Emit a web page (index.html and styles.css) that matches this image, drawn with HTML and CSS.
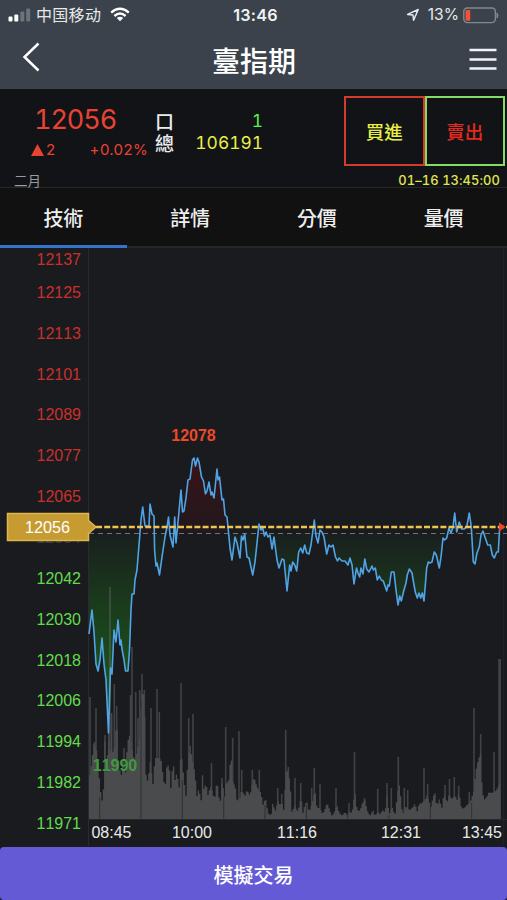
FILE: index.html
```html
<!DOCTYPE html>
<html lang="zh-Hant">
<head>
<meta charset="utf-8">
<title>臺指期</title>
<link rel="stylesheet" href="styles.css">
</head>
<body>
<header class="top">
  <div class="status">
    <div class="status-left">
      <svg width="24" height="14" viewBox="0 0 24 14"><g fill="#fff"><rect x="0.5" y="8.5" width="4" height="5" rx="1"/><rect x="6.3" y="6.5" width="4" height="7" rx="1"/></g><g fill="#6d737b"><rect x="12.3" y="3.5" width="4" height="10" rx="1"/><rect x="18.2" y="0.5" width="4" height="13" rx="1"/></g></svg>
      <span class="carrier">中国移动</span>
      <svg class="wifi" width="20" height="15" viewBox="0 0 20 15"><g fill="none" stroke="#fff" stroke-width="2.4"><path d="M1.2 5.6Q10-2 18.8 5.6"/><path d="M4.4 9Q10 4 15.6 9"/></g><path d="M6.8 11Q10 8.6 13.2 11L10 14.3Z" fill="#fff"/></svg>
    </div>
    <div class="clock">13:46</div>
    <div class="status-right">
      <svg width="14" height="14" viewBox="0 0 14 14"><path d="M1.6 6.4L12.2 1.5L7.6 12.2L7 7Z" fill="none" stroke="#e6e8ea" stroke-width="1.5" stroke-linejoin="round"/></svg>
      <span class="percent">13%</span>
      <svg width="37" height="17" viewBox="0 0 37 17"><rect x="0.8" y="1" width="31.6" height="14.6" rx="3.5" fill="none" stroke="#82888f" stroke-width="1.4"/><rect x="2.6" y="3" width="4.6" height="10.8" rx="1" fill="#f4503c"/><path d="M34 6Q36 8.2 34 11Z" fill="#82888f" stroke="#82888f"/></svg>
    </div>
  </div>
  <div class="titlebar">
    <svg width="20" height="32" viewBox="0 0 20 32"><path d="M16.5 3.5L2.5 17L16.5 30.5" fill="none" stroke="#fff" stroke-width="2.5"/></svg>
    <h1>臺指期</h1>
    <svg width="28" height="24" viewBox="0 0 28 24"><path d="M.5 2H27.5M.5 11.4H27.5M.5 20.6H27.5" stroke="#f2f3fa" stroke-width="2.5"/></svg>
  </div>
</header>
<section class="quote">
  <div class="quote-main">
    <div class="price">
      <div class="last">12056</div>
      <div class="change"><span class="delta"><svg width="13" height="12" viewBox="0 0 13 12"><path d="M6.5 0L13 12H0Z" fill="#e84232"/></svg>2</span><span>+0.02%</span></div>
    </div>
    <div class="volume">
      <div><b>口</b><span class="one">1</span></div>
      <div><b>總</b><span>106191</span></div>
    </div>
    <div class="actions"><div class="buy">買進</div><div class="sell">賣出</div></div>
  </div>
  <div class="quote-foot"><span>二月</span><time>01–16 13:45:00</time></div>
</section>
<nav class="tabs"><div class="active">技術</div><div>詳情</div><div>分價</div><div>量價</div></nav>
<svg class="chart" width="507" height="599" viewBox="0 248 507 599">
  <defs>
    <linearGradient id="down" gradientUnits="userSpaceOnUse" x1="0" y1="534" x2="0" y2="734"><stop offset="0" stop-color="#1b451b" stop-opacity=".12"/><stop offset=".35" stop-color="#1b481b" stop-opacity=".72"/><stop offset="1" stop-color="#1d651d"/></linearGradient>
    <linearGradient id="up" gradientUnits="userSpaceOnUse" x1="0" y1="458" x2="0" y2="534"><stop offset="0" stop-color="#431014" stop-opacity=".8"/><stop offset="1" stop-color="#431014" stop-opacity=".15"/></linearGradient>
    <clipPath id="above"><rect x="89" y="440" width="418" height="94"/></clipPath>
    <clipPath id="below"><rect x="89" y="534" width="418" height="220"/></clipPath>
  </defs>
  <path d="M88.5 248V846" stroke="#292b30"/>
  <path d="M503.5 248V846" stroke="#202227"/>
  <path d="M89 819.5H507" stroke="#26282b"/>
  <g clip-path="url(#above)"><path id="area-up" fill="url(#up)"/></g>
  <g clip-path="url(#below)"><path id="area-down" fill="url(#down)"/></g>
  <path id="spikes" stroke="#77797b" stroke-opacity=".42" stroke-width="1.6"/>
  <path id="bars" fill="#4a4b4d"/>
  <path id="gaps" stroke="#303134" stroke-width="1"/>
  <path d="M89 533.5H507" stroke="#72747c" stroke-dasharray="5 4"/>
  <path id="line" fill="none" stroke="#50a4e6" stroke-width="1.6" stroke-linejoin="round"/>
  <path d="M96 527H507" stroke="#efc550" stroke-width="2.4" stroke-dasharray="6 2.2"/>
  <path d="M499 522.5L505.5 527L499 531.5Z" fill="#f0452e"/>
  <g class="axis up"><text x="81" y="265">12137</text><text x="81" y="298">12125</text><text x="81" y="338.5">12113</text><text x="81" y="379.5">12101</text><text x="81" y="420">12089</text><text x="81" y="461">12077</text><text x="81" y="501.5">12065</text></g>
  <g class="axis dim"><text x="81" y="543">12054</text></g>
  <g class="axis down"><text x="81" y="584">12042</text><text x="81" y="624.5">12030</text><text x="81" y="665.5">12018</text><text x="81" y="706">12006</text><text x="81" y="747">11994</text><text x="81" y="788">11982</text><text x="81" y="828.5">11971</text></g>
  <path d="M7.5 513.5H88.5V520.5L96 527L88.5 533.5V540.5H7.5Z" fill="#c59b32" stroke="#dfb64b" stroke-width="1.5"/>
  <text class="tag" x="47.5" y="533">12056</text>
  <text class="high" x="193.5" y="440.5">12078</text>
  <text class="low" x="115" y="771">11990</text>
  <g class="times"><text x="111.5" y="838">08:45</text><text x="192" y="838">10:00</text><text x="297" y="838">11:16</text><text x="401" y="838">12:31</text><text x="482" y="838">13:45</text></g>
</svg>
<footer><div class="trade">模擬交易</div></footer>
<script src="chart.js"></script>
</body>
</html>
```
FILE: styles.css
```css
* { box-sizing: border-box; }
body { margin: 0; width: 507px; height: 900px; overflow: hidden; background: #191b1f; color: #fff; font-family: "Liberation Sans", "Noto Sans CJK TC", sans-serif; }
svg { display: block; }
.top { height: 90px; background: #3b424b; border-bottom: 1px solid #111317; }
.status { height: 30px; display: grid; grid-template-columns: 1fr auto 1fr; align-items: center; padding: 0 7px 0 8px; }
.status-left, .status-right { display: flex; align-items: center; }
.status-left { gap: 4px; }
.carrier { font: 16px/24px "Noto Sans CJK SC", sans-serif; color: #e6e8ea; letter-spacing: .3px; margin-top: -2px; }
.wifi { margin-left: 5px; margin-top: -2px; }
.clock { font: 600 16.2px/24px Inter, sans-serif; letter-spacing: .2px; color: #f1f2f4; padding-left: 3px; }
.status-right { justify-content: flex-end; }
.percent { font: 15.6px/24px Inter, sans-serif; color: #e6e8ea; margin: 0 4px 0 8px; }
.titlebar { height: 59px; display: flex; align-items: center; justify-content: space-between; padding: 0 10px 0 22px; }
h1 { margin: 0 0 0 -3px; font: 500 28px/40px "Noto Sans CJK TC", sans-serif; }
.titlebar svg:first-child { margin-bottom: 7px; }
.quote { height: 98px; background: #111317; border-bottom: 1px solid #25272b; }
.quote-main { height: 80px; display: grid; grid-template-columns: 155px 108px 1fr; padding-right: 2px; }
.price { padding: 13px 7px 0 31px; color: #e84232; }
.last { font: 27px/34px Inter, sans-serif; font-feature-settings: "tnum"; padding-left: 3px; letter-spacing: -1.1px; }
.change { display: flex; justify-content: space-between; font: 15px/20px Inter, sans-serif; letter-spacing: .35px; margin-top: 3px; }
.delta { display: flex; align-items: center; gap: 2px; }
.volume { padding-top: 20px; }
.volume div { display: flex; justify-content: space-between; align-items: center; height: 22px; color: #e9f046; font: 17.4px/22px Inter, sans-serif; font-feature-settings: "tnum"; }
.volume b { font: 500 19px/22px "Noto Sans CJK TC", sans-serif; color: #e9ebee; }
.volume .one { color: #5df04c; }
.actions { display: flex; justify-content: flex-end; padding-top: 6px; }
.actions div { width: 80.5px; height: 70px; border: 2px solid #d33b2d; text-align: center; font: 500 18.5px/67px "Noto Sans CJK TC", sans-serif; color: #e9f046; }
.actions .sell { border-color: #85dc62; color: #e22b1f; }
.quote-foot { display: flex; justify-content: space-between; height: 17px; padding: 0 7px 0 14px; font: 13.5px/20px "Noto Sans CJK TC", sans-serif; color: #999ca1; }
.quote-foot time { font: 500 12.9px/21px Inter, sans-serif; font-feature-settings: "tnum"; letter-spacing: .1px; color: #e2e650; }
.tabs { height: 60px; display: grid; grid-template-columns: repeat(4, 1fr); background: #111112; border-bottom: 2px solid #24272c; }
.tabs div { height: 60px; text-align: center; font: 500 20px/59px "Noto Sans CJK TC", sans-serif; color: #eee; }
.tabs .active { border-bottom: 3px solid #3474ca; }
.chart { font-family: "Liberation Sans", sans-serif; font-size: 16px; font-kerning: none; }
.axis { text-anchor: end; }
.axis.up { fill: #c9302b; }
.axis.down { fill: #62dc4b; }
.axis.dim { fill: #39433a; }
.tag, .high, .low, .times { text-anchor: middle; }
.tag { fill: #fff; font-size: 16.2px; }
.high, .low { font-weight: 700; }
.high { fill: #e94a29; }
.low { fill: #3f9a3d; }
.times { fill: #e8e9ea; }
footer { height: 53px; background: #191b1f; }
.trade { height: 53px; border-radius: 4px; background: #655ad5; text-align: center; font: 500 20px/55px "Noto Sans CJK TC", sans-serif; }
```
FILE: chart.js
```js
const price = "89,634 92,610 94,632 96,664 98,671 100,660 102,638 104,664 106,680 108.5,733 110.5,668 112,674 114,630 116,642 118,620 120,645 121,640 122,649 124,660 125.5,671 128,671 129.5,650 131,610 132,594 134,594 135,580 137,570 139,545 141,520 142.7,507 145,526 149,526 150,504 152,514 154,516 154.6,550 156,566 157,563 159.5,575 162,557 165,537 167,527 168.5,517 170,535 173,547 174.7,517 176,543 178,522 181,490 182.5,512 184,511 186,498 188,480 190,479 192.5,460 194,458 195.5,466 197.5,458 199,462 201.5,477 203.5,481 205.5,494 207,491 209,482 211,495 212,492 214,498 217,469 218,480 219.5,477 222,500 223.5,499 225,515 227,517 228,527 230,548 232,560 235,537 237,543 240,558 241.5,536 243,540 244.7,534 247,557 249,558 252.7,575 255,562 259,524 261,530 262.7,528 264.5,536 266,532 268,537 270,535 272,549 274,537 277,560 279,568 282,559 284,560 287,591 289.7,565 291,571 292.7,562 294.7,565 296.7,571 298.7,552 300.7,548 302.7,553 304.7,545 306.7,553 309,554 311,545 314.3,520 316,536 318,543 320,530 322,532 324,537 326.7,554 329,545 331,547 333,545 335.5,557 337.5,561 339,558 342,561 345,561 348,565 350,558 352,565 354,584 356.5,568 358,573 359.7,577 361,568 363,574 364.8,559 366.7,569 369,572 372,566 373.3,570 375.3,568 377.3,580 379.3,576 381.3,580 383.3,581 386.7,591 388,585 389.3,586 391.3,572 394,572 396,590 398,605 399.7,596 401.3,601 404,590 406,583 407.3,575 409.3,569 412,573 414,585 415.3,592 417.3,598 419,593 420.7,598 422.3,593 424,601 426.7,568 428.3,562 430,563 432,562 434.3,552 436.3,555 439.3,568 441,557 443,538 444.7,540 446.7,538 449,528 451,533 453,527 454.7,513 456.7,532 459.3,522 461.7,529 464,529 466.7,527 469.3,513 471.3,527 473.3,562 475,564 477,553 479.3,547 481,535 483,531 485.3,538 487.7,545 490.3,545 492.3,555 494.3,558 496.7,552 498.3,552 499.7,527";
// Lower body of the volume histogram: x, top
const body = [[90,775],[94,742],[97,752],[99,775],[101,795],[103,805],[105,735],[106.5,781],[108.5,733],[110,760],[112,705],[113.5,770],[115,735],[117,725],[118.5,760],[121,778],[123,760],[125,779],[127,750],[129,733],[131,742],[133,753],[135,765],[137,750],[139,743],[141,700],[142.5,690],[144.5,700],[145.5,772],[148,783],[150,760],[153,784],[155,758],[158,758],[161,759],[163,775],[165,789],[166.5,768],[169,764],[171,790],[173,760],[175,780],[177,772],[179,790],[181,750],[184,780],[186,796],[188,758],[190,745],[192.5,760],[195,773],[197,796],[199,788],[201,803],[202.5,775],[204,790],[206,783],[208.5,798],[210,785],[212,790],[214.5,800],[217,780],[220,806],[222,780],[224.5,797],[226,783],[228.5,782],[231,754],[233,785],[235,784],[237,800],[239,801],[241,792],[243,792],[245,796],[247,790],[250,796],[252,785],[254,777],[257,787],[259,790],[261,793],[263,805],[265.5,798],[268,813],[271,816],[273,802],[275,812],[278,801],[280,805],[282,803],[284,811],[286,772],[288,771],[290,783],[292,812],[295,805],[297,812],[299,807],[301,797],[303,813],[305,804],[307,802],[309,812],[312,804],[315,790],[317,808],[320,808],[322,813],[324,812],[327,803],[329,808],[332,816],[334,813],[337,805],[339,812],[342,816],[345,812],[347,815],[350,812],[352,813],[355,792],[357,810],[360,811],[362,804],[365,800],[367,810],[370,816],[373,810],[375,816],[378,812],[380,814],[383,810],[385,813],[387,795],[389,815],[392,807],[395,815],[398,790],[400,783],[401,803],[403,815],[405,806],[408,809],[410,810],[413,807],[415,803],[417,812],[419,804],[422,803],[425,800],[427,795],[430,804],[431,807],[433,797],[435,793],[437,807],[439,799],[442,808],[444,793],[447,803],[449,795],[452,799],[455,795],[457,800],[459,792],[461,806],[463,809],[467,805],[470,803],[472,797],[474,790],[475.5,773],[477.5,763],[479.5,756],[481,752],[482,788],[484,800],[487,797],[489,792],[492,793],[495,792],[498,787],[499.7,784]];
const spikes = "90,697 96,708 94.7,742 105,735 108.7,723 110,587 114.3,684 116.7,706 124,748 132,647 130.5,695 135.7,692 138,718 139.7,690 142,674 144.3,690 151,708 157,689 159.3,712 181,683 188.7,718 193,714 211.5,763 222,778 225.7,727 232.7,738 239,731 241.7,770 252.3,770 259.3,770 277.7,788 281.7,794 285.7,730 288.3,767 295,778 300.7,783 311.7,788 314.3,768 320,784 336,788 349,803 354.5,752 364.5,798 377.7,789 387,783 391.3,788 398.3,757 404.3,788 407.7,790 424,768 427.7,784 445,785 449.5,779 454.3,777 458.7,786 469.3,792 474,708 480.7,734 494,752 499,659 500.2,659";
const set = (id, d) => document.getElementById(id).setAttribute("d", d);
const bottom = 819;
set("line", "M" + price);
for (const id of ["area-up", "area-down"]) set(id, `M89,534 L${price} L499.7,534Z`);
// Tops are interpolated between the listed points so each bar is distinct
const topAt = x => {
  const i = Math.max(1, body.findIndex(p => p[0] >= x));
  const [a, b] = [body[i - 1], body[i]];
  const t = Math.min(1, Math.max(0, (x - a[0]) / (b[0] - a[0])));
  return (a[1] + (b[1] - a[1]) * t).toFixed(1);
};
const step = 1.376;
let bars = `M89,${bottom}`;
for (let i = 0; i < 299; i++) {
  const x = 89 + i * step;
  bars += `V${topAt(Math.min(x + step / 2, 499.7))}H${(x + step).toFixed(2)}`;
}
set("bars", bars + `V${bottom}Z`);
set("spikes", spikes.split(" ").map(p => `M${p}V${bottom}`).join(""));
set("gaps", Array.from({ length: 10 }, (_, i) => `M${99.7 + i * 41.33},${[797, 700, 780, 797, 805, 804, 814, 815, 807, 803][i]}V${bottom}`).join(""));
```
